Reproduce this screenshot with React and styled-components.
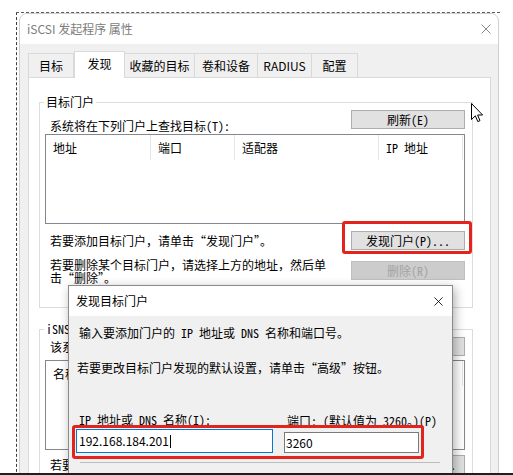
import React from 'react';
import styled, { createGlobalStyle } from 'styled-components';

const UI = `"Noto Sans CJK SC", "Noto Sans", sans-serif`;
const MONO = `"Noto Sans Mono CJK SC", "Noto Sans CJK SC", monospace`;

const GlobalStyle = createGlobalStyle`
  html, body { margin: 0; padding: 0; background: #fff; }
  body { overflow: hidden; }
  * { box-sizing: border-box; }
`;

const Desktop = styled.div`
  position: relative;
  width: 513px;
  height: 475px;
  overflow: hidden;
  background: #fff;
  font-family: ${UI};
  font-size: 12px;
  color: #000;
`;

const BackWindow = styled.div`
  position: absolute;
  left: 16px;
  top: 12px;
  width: 484px;
  height: 480px;
  border-top: 1px dashed #5a5a5a;
  border-left: 1px dashed #3c3c3c;
`;

const Window = styled.div`
  position: absolute;
  left: ${p => p.$x}px;
  top: ${p => p.$y}px;
  width: ${p => p.$w}px;
  height: ${p => p.$h}px;
  display: flex;
  flex-direction: column;
  background: #f0f0f0;
  border: 1px solid ${p => (p.$active ? '#8a8a8a' : '#cfcfcf')};
  border-radius: ${p => p.$r || 0}px ${p => p.$r || 0}px 0 0;
  box-shadow: ${p => (p.$active ? '2px 3px 10px rgba(0,0,0,0.32)' : 'none')};
  overflow: hidden;
`;

const TitleBar = styled.div`
  height: ${p => p.$h}px;
  flex-shrink: 0;
  display: flex;
  align-items: center;
  justify-content: space-between;
  padding: 0 ${p => p.$pr}px 0 ${p => p.$pl}px;
  background: #fff;
`;

const TitleText = styled.span`
  font-size: 12px;
  line-height: 14px;
  color: ${p => (p.$active ? '#000' : '#7c7c7c')};
`;

const CloseGlyph = ({ size, color }) => (
  <svg width={size} height={size} viewBox="0 0 10 10" style={{ display: 'block' }}>
    <path d="M0.5 0.5 L9.5 9.5 M9.5 0.5 L0.5 9.5" stroke={color} strokeWidth="1" fill="none" />
  </svg>
);

const MainBody = styled.div`
  flex: 1;
  display: flex;
  flex-direction: column;
  padding: 9px 7px 0 8px;
`;

const TabStrip = styled.div`
  display: flex;
  align-items: flex-end;
  height: 24px;
  position: relative;
  z-index: 1;
`;

const Tab = styled.div`
  width: ${p => p.$w}px;
  height: ${p => (p.$active ? 27 : 24)}px;
  margin-bottom: ${p => (p.$active ? -1 : 0)}px;
  display: flex;
  align-items: center;
  justify-content: center;
  background: ${p => (p.$active ? '#fff' : '#f0f0f0')};
  border: 1px solid #d9d9d9;
  border-bottom: none;
  border-left: ${p => (p.$first || p.$active ? '1px solid #d9d9d9' : 'none')};
  font-size: 12px;
  line-height: 14px;
  padding-bottom: ${p => (p.$active ? 3 : 0)}px;
  white-space: nowrap;
`;

const Panel = styled.div`
  flex: 1;
  background: #fff;
  border: 1px solid #d9d9d9;
  padding: 17px 17px 0 10px;
`;

const Group = styled.fieldset`
  margin: ${p => p.$mt || 0}px 0 0 0;
  padding: 0;
  border: 1px solid #dcdcdc;
  min-width: 0;
`;

const GroupTitle = styled.legend`
  margin-left: 4px;
  padding: 0 2px;
  font-family: ${p => (p.$mono ? MONO : UI)};
  font-size: 12px;
  line-height: 14px;
`;

const GroupBody = styled.div`
  padding: 1px 7px ${p => p.$pb || 0}px 5px;
`;

const Row = styled.div`
  display: flex;
  justify-content: space-between;
  align-items: ${p => p.$align || 'center'};
  margin-top: ${p => p.$mt || 0}px;
`;

const Text = styled.div`
  margin: ${p => p.$mtop || 0}px 0 ${p => p.$mb || 0}px 5px;
  font-family: ${p => (p.$mono ? MONO : UI)};
  line-height: ${p => p.$lh || 14}px;
  white-space: nowrap;
`;

const Button = styled.button`
  flex-shrink: 0;
  width: 114px;
  height: 19px;
  padding: 0;
  font-family: ${MONO};
  font-size: 12px;
  line-height: 17px;
  color: ${p => (p.disabled ? '#a3a3a3' : '#000')};
  background: ${p => (p.disabled ? '#cccccc' : '#e1e1e1')};
  border: 1px solid ${p => (p.disabled ? '#bfbfbf' : '#adadad')};
  border-radius: 0;
`;

const ListBox = styled.div`
  margin-top: ${p => p.$mt}px;
  height: 90px;
  border: 1px solid #828790;
  background: #fff;
`;

const ListHeader = styled.div`
  display: flex;
  height: 25px;
`;

const HeaderCell = styled.div`
  width: ${p => p.$w}px;
  flex-shrink: 0;
  padding-left: 7px;
  border-right: 1px solid #e5e5e5;
  font-family: ${MONO};
  line-height: 25px;
  white-space: nowrap;
`;

const DialogBody = styled.div`
  flex: 1;
  padding: 10px 0 0 7px;
`;

const Para = styled.div`
  margin-top: ${p => p.$mt || 0}px;
  padding-left: ${p => p.$pl || 0}px;
  font-family: ${p => (p.$mono ? MONO : UI)};
  line-height: 14px;
  white-space: nowrap;
`;

const FieldRow = styled.div`
  display: flex;
  align-items: flex-end;
  gap: 11px;
  margin-top: 38px;
`;

const Field = styled.div`
  display: flex;
  flex-direction: column;
  width: ${p => p.$w}px;
`;

const FieldLabel = styled.div`
  padding-left: 3px;
  margin-bottom: ${p => p.$mb}px;
  font-family: ${MONO};
  line-height: 14px;
  white-space: nowrap;
`;

const InputBox = styled.div`
  height: ${p => p.$h}px;
  display: flex;
  align-items: center;
  padding-left: ${p => p.$pl}px;
  background: #fff;
  border: 1px solid ${p => (p.$focus ? '#0078d7' : '#7a7a7a')};
  font-size: 12px;
  line-height: 14px;
`;

const Caret = styled.span`
  display: inline-block;
  width: 1px;
  height: 13px;
  margin-left: 1px;
  background: #000;
`;

const Separator = styled.div`
  height: 1px;
  margin: 9px 12px 0 4px;
  background: #bdbdbd;
`;

const Highlight = styled.div`
  position: absolute;
  left: ${p => p.$x}px;
  top: ${p => p.$y}px;
  width: ${p => p.$w}px;
  height: ${p => p.$h}px;
  border: 3px solid #e3241d;
  border-radius: 3px;
  pointer-events: none;
`;

const CursorWrap = styled.div`
  position: absolute;
  left: 471px;
  top: 103px;
  width: 13px;
  height: 20px;
`;

const TaskbarEdge = styled.div`
  position: absolute;
  left: 0;
  bottom: 0;
  width: 100%;
  height: 2px;
  background: #1e1e1e;
`;

const tabs = [
  { label: '目标', w: 46 },
  { label: '发现', w: 51, active: true },
  { label: '收藏的目标', w: 70 },
  { label: '卷和设备', w: 63 },
  { label: 'RADIUS', w: 54 },
  { label: '配置', w: 46 },
];

const portalCols = [
  { label: '地址', w: 105 },
  { label: '端口', w: 84 },
  { label: '适配器', w: 144 },
  { label: 'IP 地址', w: 84 },
];

export default function App() {
  return (
    <>
      <GlobalStyle />
      <Desktop>
        <BackWindow />
        <Window $x={19} $y={13} $w={480} $h={480} $r={8}>
          <TitleBar $h={30} $pl={7} $pr={7}>
            <TitleText>iSCSI 发起程序 属性</TitleText>
            <CloseGlyph size={10} color="#8a8a8a" />
          </TitleBar>
          <MainBody>
            <TabStrip>
              {tabs.map((t, i) => (
                <Tab key={t.label} $w={t.w} $active={t.active} $first={i === 0}>
                  {t.label}
                </Tab>
              ))}
            </TabStrip>
            <Panel>
              <Group>
                <GroupTitle>目标门户</GroupTitle>
                <GroupBody $pb={23}>
                  <Row $align="flex-end">
                    <Text $mono $mb={-4}>系统将在下列门户上查找目标(T):</Text>
                    <Button>刷新(E)</Button>
                  </Row>
                  <ListBox $mt={5}>
                    <ListHeader>
                      {portalCols.map(c => (
                        <HeaderCell key={c.label} $w={c.w}>{c.label}</HeaderCell>
                      ))}
                    </ListHeader>
                  </ListBox>
                  <Row $mt={7}>
                    <Text>若要添加目标门户，请单击“发现门户”。</Text>
                    <Button>发现门户(P)...</Button>
                  </Row>
                  <Row $mt={11} $align="flex-start">
                    <Text $lh={13} $mtop={-3}>
                      若要删除某个目标门户，请选择上方的地址，然后单
                      <br />
                      击“删除”。
                    </Text>
                    <Button disabled>删除(R)</Button>
                  </Row>
                </GroupBody>
              </Group>
              <Group $mt={14}>
                <GroupTitle $mono>iSNS 服务器</GroupTitle>
                <GroupBody $pb={20}>
                  <Row>
                    <Text $mono>该系统已在下列 iSNS 服务器上注册(I):</Text>
                    <Button>刷新(F)</Button>
                  </Row>
                  <ListBox $mt={4}>
                    <ListHeader>
                      <HeaderCell $w={417}>名称</HeaderCell>
                    </ListHeader>
                  </ListBox>
                  <Row $mt={5}>
                    <Text>若要添加 iSNS 服务器，请单击“添加服务器”。</Text>
                    <Button>添加服务器(D)...</Button>
                  </Row>
                </GroupBody>
              </Group>
            </Panel>
          </MainBody>
        </Window>

        <Window $x={68} $y={285} $w={385} $h={210} $active>
          <TitleBar $h={30} $pl={7} $pr={9}>
            <TitleText $active>发现目标门户</TitleText>
            <CloseGlyph size={9} color="#111" />
          </TitleBar>
          <DialogBody>
            <Para $mono $pl={3}>输入要添加门户的 IP 地址或 DNS 名称和端口号。</Para>
            <Para $mt={21} $pl={1}>若要更改目标门户发现的默认设置，请单击“高级”按钮。</Para>
            <FieldRow>
              <Field $w={197}>
                <FieldLabel $mb={2}>IP 地址或 DNS 名称(I):</FieldLabel>
                <InputBox $h={24} $pl={2} $focus>
                  192.168.184.201<Caret />
                </InputBox>
              </Field>
              <Field $w={135}>
                <FieldLabel $mb={4}>端口: (默认值为 3260。)(P)</FieldLabel>
                <InputBox $h={21} $pl={1}>3260</InputBox>
              </Field>
            </FieldRow>
            <Separator />
          </DialogBody>
        </Window>

        <CursorWrap>
          <svg width="13" height="20" viewBox="0 0 13 20">
            <path
              d="M0.5 0.5 L0.5 16.5 L4.3 12.8 L6.8 18.6 L9 17.6 L6.6 12 L11.6 12 Z"
              fill="#fff"
              stroke="#000"
              strokeWidth="1"
              strokeLinejoin="miter"
            />
          </svg>
        </CursorWrap>

        <Highlight $x={75} $y={51} $w={41} $h={26} />
        <Highlight $x={342} $y={221} $w={130} $h={33} />
        <Highlight $x={72} $y={425} $w={352} $h={34} />

        <TaskbarEdge />
      </Desktop>
    </>
  );
}
